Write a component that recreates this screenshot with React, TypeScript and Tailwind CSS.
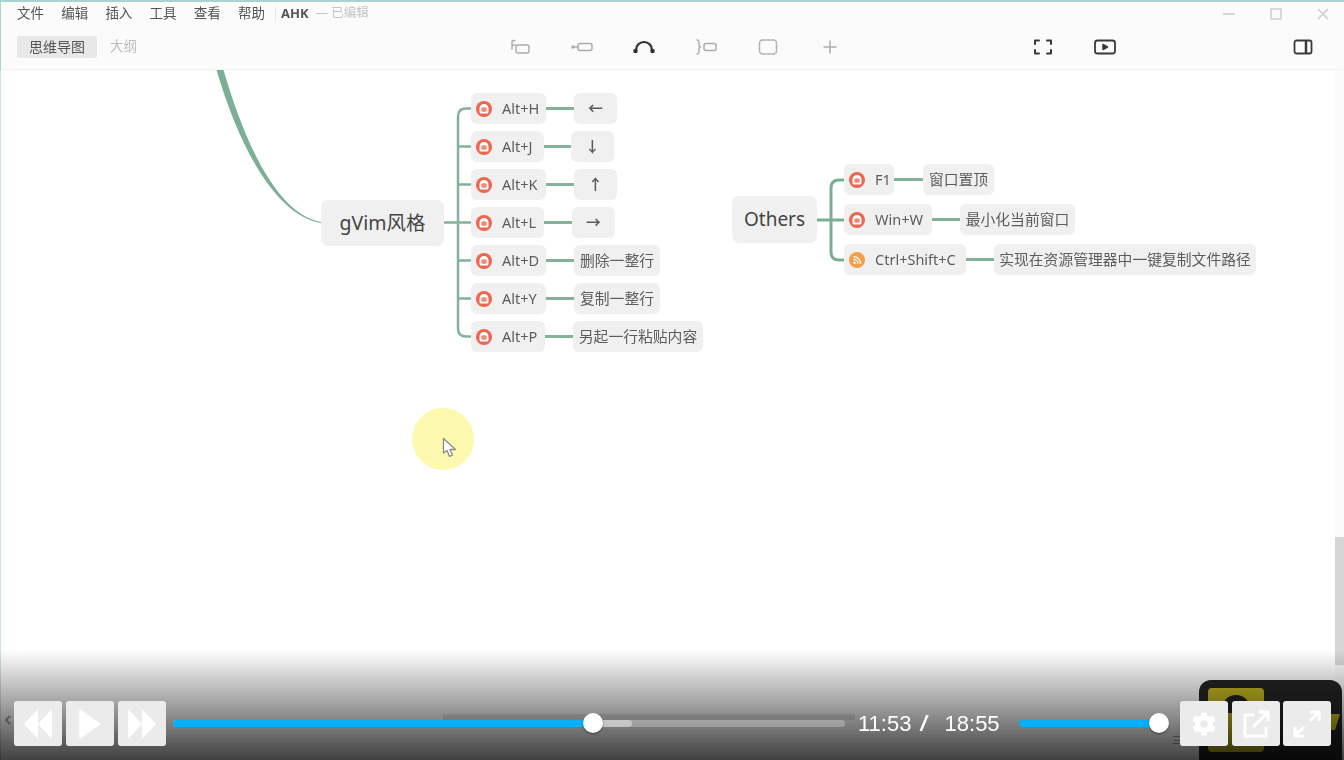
import { FaCog } from "react-icons/fa";

const menus = ["文件", "编辑", "插入", "工具", "查看", "帮助"];

const gvimRows = [
  { keys: "Alt+H", keyW: "w-[75px]", lineW: "w-[28px]", value: "←", valueW: "w-[43px]" },
  { keys: "Alt+J", keyW: "w-[73px]", lineW: "w-[27px]", value: "↓", valueW: "w-[43px]" },
  { keys: "Alt+K", keyW: "w-[75px]", lineW: "w-[28px]", value: "↑", valueW: "w-[43px]" },
  { keys: "Alt+L", keyW: "w-[73px]", lineW: "w-[28px]", value: "→", valueW: "w-[43px]" },
  { keys: "Alt+D", keyW: "w-[75px]", lineW: "w-[28px]", value: "删除一整行", valueW: "w-[86px]" },
  { keys: "Alt+Y", keyW: "w-[75px]", lineW: "w-[28px]", value: "复制一整行", valueW: "w-[86px]" },
  { keys: "Alt+P", keyW: "w-[74px]", lineW: "w-[28px]", value: "另起一行粘贴内容", valueW: "w-[130px]" },
];

const otherRows = [
  { keys: "F1", keyW: "w-[50px]", lineW: "w-[29px]", value: "窗口置顶", valueW: "w-[71px]" },
  { keys: "Win+W", keyW: "w-[88px]", lineW: "w-[28px]", value: "最小化当前窗口", valueW: "w-[115px]" },
  { keys: "Ctrl+Shift+C", keyW: "w-[122px]", lineW: "w-[28px]", value: "实现在资源管理器中一键复制文件路径", valueW: "w-[262px]", rss: true },
];

function PriorityIcon() {
  return (
    <svg width="16" height="16" viewBox="0 0 16 16" className="shrink-0">
      <circle cx="8" cy="8" r="8" fill="#ee6650" />
      <path d="M3.500 7.500a4.500 4.500 0 0 1 9 0V11a1.500 1.500 0 0 1-1.500 1.500H5A1.500 1.500 0 0 1 3.500 11z" fill="#fff" />
      <rect x="5.300" y="6.200" width="5.400" height="4.600" rx="1.500" fill="#f08a78" />
    </svg>
  );
}

function RssIcon() {
  return (
    <svg width="16" height="16" viewBox="0 0 16 16" className="shrink-0">
      <circle cx="8" cy="8" r="8" fill="#f3a04c" />
      <circle cx="5.500" cy="10.700" r="1.200" fill="#fff" />
      <path d="M4.500 7.300a4.400 4.400 0 0 1 4.400 4.400M4.500 4.700a7 7 0 0 1 7 7" fill="none" stroke="#fff" strokeWidth="1.300" />
    </svg>
  );
}

function Row({ row }: { row: { keys: string; keyW: string; lineW: string; value: string; valueW: string; rss?: boolean } }) {
  return (
    <div className="flex items-center h-[31px]">
      <div className={`${row.keyW} h-full flex items-center pl-[5px] gap-[10px] rounded-[6px] bg-[#f0f0f0] text-[14.500px] text-[#5c5c5c]`}>
        {row.rss ? <RssIcon /> : <PriorityIcon />}
        <span className="whitespace-nowrap">{row.keys}</span>
      </div>
      <div className={`${row.lineW} h-[2.500px] bg-[#82b39a]`} />
      <div className={`${row.valueW} h-full flex items-center justify-center rounded-[6px] bg-[#f0f0f0] text-[14.800px] text-[#5c5c5c] whitespace-nowrap ${row.value.length === 1 ? "font-bold" : ""}`}>
        {row.value}
      </div>
    </div>
  );
}

function ToolIcon({ children, className = "text-[#adadad]" }: { children: React.ReactNode; className?: string }) {
  return (
    <div className={`w-[62px] flex justify-center ${className}`}>
      <svg width="24" height="20" viewBox="0 0 24 20" fill="none" stroke="currentColor" strokeWidth="1.500" strokeLinecap="round" strokeLinejoin="round">
        {children}
      </svg>
    </div>
  );
}

function PlayerButton({ children }: { children: React.ReactNode }) {
  return (
    <div className="w-[48px] h-[45px] shrink-0 flex items-center justify-center rounded-[3px] bg-[#ebebeb]">
      {children}
    </div>
  );
}

export default function App() {
  return (
    <div className="relative w-[1344px] h-[760px] overflow-hidden bg-white flex flex-col font-['Noto_Sans','Noto_Sans_CJK_SC',sans-serif]">
      {/* window chrome */}
      <header className="h-[70px] shrink-0 flex flex-col bg-[#fbfbfb] border-t-2 border-l border-[#a9d3d0] border-b-0 blur-[0.5px]">
        <div className="h-[23px] flex items-center pl-[16px] pr-[15px] text-[13.500px] text-[#555]">
          <div className="flex gap-[17.200px]">
            {menus.map((m) => (
              <span key={m}>{m}</span>
            ))}
          </div>
          <div className="w-px h-[14px] bg-[#e6e6e6] ml-[10px] mr-[5px]" />
          <span className="font-bold text-[13px] text-[#555]">AHK</span>
          <span className="ml-[7px] text-[12.500px] text-[#c4c4c4]">— 已编辑</span>
          <div className="ml-auto flex items-center gap-[35px] text-[#c8c8c8]">
            <svg width="12" height="12" viewBox="0 0 12 12" stroke="currentColor" strokeWidth="1.500"><path d="M0 6h12" /></svg>
            <svg width="12" height="12" viewBox="0 0 12 12" fill="none" stroke="currentColor" strokeWidth="1.300"><rect x="1" y="1" width="10" height="10" /></svg>
            <svg width="12" height="12" viewBox="0 0 12 12" stroke="currentColor" strokeWidth="1.300"><path d="M1 1l10 10M11 1L1 11" /></svg>
          </div>
        </div>
        <div className="flex-1 flex items-center pl-[16px] pb-[1px] border-b border-[#f1f1f1]">
          <div className="w-[80px] h-[22px] flex items-center justify-center bg-[#e8e8e8] rounded-[2px] text-[14px] text-[#555]">思维导图</div>
          <span className="ml-[13px] text-[13.500px] text-[#bdbdbd]">大纲</span>
          <div className="ml-[352px] flex">
            <ToolIcon>
              <path d="M7 8H5.500A1.500 1.500 0 0 0 4 9.500V12M7 3.500H5.500A1.500 1.500 0 0 0 4 5v5" />
              <rect x="8" y="8" width="13" height="8" rx="2" />
            </ToolIcon>
            <ToolIcon>
              <circle cx="3" cy="10" r="1" />
              <path d="M4 10h4" />
              <rect x="8" y="6.500" width="14" height="7" rx="2" />
            </ToolIcon>
            <ToolIcon className="text-[#2f2f2f]">
              <path d="M4 13a8 8 0 0 1 16 0" strokeWidth="2.200" />
              <circle cx="3.500" cy="14" r="1.500" fill="currentColor" />
              <circle cx="20.500" cy="14" r="1.500" fill="currentColor" />
            </ToolIcon>
            <ToolIcon>
              <path d="M3 3c2 0 2 1 2 3v2c0 1 .5 2 1.500 2C5.500 10 5 11 5 12v2c0 2 0 3-2 3" />
              <rect x="10" y="6.500" width="12" height="7" rx="2" />
            </ToolIcon>
            <ToolIcon>
              <rect x="3.500" y="3" width="17" height="14" rx="3" strokeDasharray="3 1.500" />
            </ToolIcon>
            <ToolIcon>
              <path d="M12 4v12M6 10h12" />
            </ToolIcon>
          </div>
          <div className="ml-[151px] flex">
            <ToolIcon className="text-[#3a3a3a]">
              <path d="M4 7V3.500h4M16 3.500h4V7M20 13v3.500h-4M8 16.500H4V13" strokeWidth="2" />
            </ToolIcon>
            <ToolIcon className="text-[#3a3a3a]">
              <rect x="2" y="3.500" width="20" height="13" rx="2.500" strokeWidth="1.800" />
              <path d="M10 7.500v5l4.500-2.500z" fill="currentColor" />
            </ToolIcon>
          </div>
          <div className="ml-[157px] text-[#3a3a3a]">
            <svg width="20" height="20" viewBox="0 0 20 20" fill="none" stroke="currentColor" strokeWidth="1.800">
              <rect x="1.500" y="3.500" width="17" height="13" rx="2" />
              <path d="M13 3.500v13" strokeWidth="2.500" />
            </svg>
          </div>
        </div>
      </header>

      {/* mind map canvas */}
      <main className="relative flex-1 border-l border-[#cfe3e2] blur-[0.5px]">
        <svg className="absolute left-0 top-0" width="1344" height="690" viewBox="0 70 1344 690" fill="none">
          <path d="M215.500 70C236 140 272 215 320 223L320 222C275 214 243 140 222.500 70Z" fill="#7cb096" />
          <g stroke="#82b39a" strokeWidth="2.500">
            <path d="M471 108.500H465Q457 108.500 457 116.500V328.500Q457 336.500 465 336.500H471" />
            <path d="M457 146.500H471M457 184.500H471M443 222.500H471M457 260.500H471M457 298.500H471" />
          </g>
          <g stroke="#7aae94" strokeWidth="3">
            <path d="M844 180H838Q830 180 830 188V252Q830 260 838 260H844" />
            <path d="M816 220H844" />
          </g>
        </svg>

        <div className="absolute left-[320px] top-[130px] w-[123px] h-[46px] flex items-center justify-center rounded-[7px] bg-[#f0f0f0] text-[19.500px] text-[#444]">
          gVim风格
        </div>
        <div className="absolute left-[470px] top-[23px] flex flex-col gap-[7px]">
          {gvimRows.map((r) => (
            <Row key={r.keys} row={r} />
          ))}
        </div>

        <div className="absolute left-[731px] top-[126px] w-[85px] h-[47px] flex items-center justify-center rounded-[7px] bg-[#f0f0f0] text-[19px] text-[#444]">
          Others
        </div>
        <div className="absolute left-[843px] top-[94px] flex flex-col gap-[9px]">
          {otherRows.map((r) => (
            <Row key={r.keys} row={r} />
          ))}
        </div>

        {/* presenter's cursor highlight */}
        <div className="absolute left-[411px] top-[338px] w-[62px] h-[62px] rounded-full bg-[#fdfab0]" />
        <svg className="absolute left-[441px] top-[367px]" width="16" height="22" viewBox="0 0 16 22">
          <path d="M1.500 1.500V16L5 13.500 7.500 19.500 10.500 18 8 12.500H13.500Z" fill="#fff" stroke="#8b8b85" strokeWidth="1.300" strokeLinejoin="round" />
        </svg>

        {/* scrollbar */}
        <div className="absolute right-0 top-0 bottom-0 w-[9px] bg-[#fbfbfb]">
          <div className="absolute left-0 right-0 top-[467px] h-[128px] bg-[#d6d6d6]" />
        </div>
      </main>

      {/* logo watermark behind the player */}
      <div className="absolute left-[1199px] top-[680px] w-[143px] h-[90px] rounded-[12px] bg-[#242424]">
        <div className="absolute left-[9px] top-[8px] w-[56px] h-[64px] rounded-[4px] bg-[#c6ba22]">
          <div className="absolute left-[14px] top-[7px] w-[28px] h-[18px] rounded-t-full bg-[#222]" />
        </div>
        <svg className="absolute left-[132px] top-[34px]" width="9" height="16" viewBox="0 0 9 16">
          <path d="M0 0H9L4 16H0Z" fill="#c6ba22" />
        </svg>
      </div>

      {/* player */}
      <div className="absolute left-0 right-0 bottom-0 h-[110px] bg-linear-to-b from-transparent to-black/75" />
      <div className="absolute left-[1172px] top-[735px] text-[10px] leading-none text-[#333]">三</div>
      <svg className="absolute left-[4px] top-[714px] text-[#555]" width="8" height="12" viewBox="0 0 8 12" fill="none" stroke="currentColor" strokeWidth="2">
        <path d="M6 2L2 6l4 4" />
      </svg>
      <div className="absolute left-[443px] top-[714px] w-[412px] h-[6px] bg-black/10" />
      <div className="absolute left-[14px] right-[13px] bottom-[14px] flex items-center font-['Liberation_Sans',sans-serif]">
        <div className="flex gap-[4px]">
          <PlayerButton>
            <svg width="28" height="30" viewBox="0 0 28 30" fill="#fff"><path d="M14 0v30L0 15zM28 0v30L14 15z" /></svg>
          </PlayerButton>
          <PlayerButton>
            <svg width="22" height="30" viewBox="0 0 22 30" fill="#fff" stroke="#fff" strokeWidth="1.500" strokeLinejoin="round"><path d="M1 1v28l20-14z" /></svg>
          </PlayerButton>
          <PlayerButton>
            <svg width="28" height="30" viewBox="0 0 28 30" fill="#fff"><path d="M0 0v30l14-15zM14 0v30l14-15z" /></svg>
          </PlayerButton>
        </div>

        <div className="relative ml-[7px] w-[672px] h-[7px] rounded-full bg-white/25">
          <div className="absolute left-0 top-0 h-full w-[459px] rounded-full bg-white/40" />
          <div className="absolute left-0 top-0 h-full w-[420px] rounded-full bg-[#00b0ff]" />
          <div className="absolute left-[410px] top-[-7px] w-[20px] h-[20px] rounded-full bg-white shadow-[0_1px_2px_rgba(0,0,0,0.5)]" />
        </div>

        <div className="ml-[13px] w-[143px] flex text-[22px] leading-none text-white whitespace-nowrap">
          <span>11:53</span>
          <span className="ml-[10px] scale-x-150">/</span>
          <span className="ml-[17px]">18:55</span>
        </div>

        <div className="relative ml-[18px] w-[140px] h-[7px] rounded-full bg-[#00b0ff]">
          <div className="absolute left-[130px] top-[-7px] w-[20px] h-[20px] rounded-full bg-white shadow-[0_1px_2px_rgba(0,0,0,0.5)]" />
        </div>

        <div className="ml-[21px] flex gap-[4px]">
          <PlayerButton>
            <FaCog className="w-[24px] h-[24px] text-white" />
          </PlayerButton>
          <PlayerButton>
            <svg width="30" height="30" viewBox="0 0 30 30" fill="none" stroke="#fff" strokeWidth="3">
              <path d="M13 6H4v21h21v-9" />
              <path d="M12 18L27 3M18 3h9v9" />
            </svg>
          </PlayerButton>
          <div className="-ml-[1px]">
            <PlayerButton>
              <svg width="28" height="28" viewBox="0 0 28 28" fill="none" stroke="#fff" strokeWidth="3">
                <path d="M17 11L26 2M17 2h9v9M11 17l-9 9M2 17v9h9" />
              </svg>
            </PlayerButton>
          </div>
        </div>
      </div>
    </div>
  );
}
